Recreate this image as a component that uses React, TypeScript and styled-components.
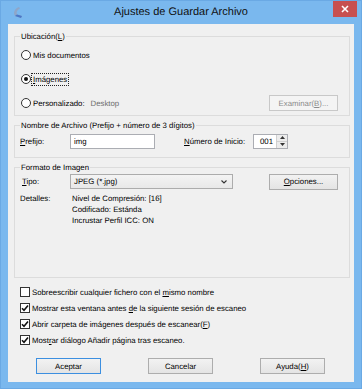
import React from 'react';
import styled, { createGlobalStyle } from 'styled-components';

const Global = createGlobalStyle`
  html, body { margin: 0; padding: 0; background: #7ab8ee; }
  body { font-family: "Liberation Sans", Arial, sans-serif; text-rendering: geometricPrecision; }
  #root { width: 362px; height: 389px; }
  * { box-sizing: border-box; }
`;

const Window = styled.div`
  width: 362px;
  height: 389px;
  background: #7ab8ee;
  border: 1px solid #6aa9e4;
  display: flex;
  flex-direction: column;
`;

const TitleBar = styled.div`
  height: 23px;
  display: grid;
  grid-template-columns: 1fr auto 1fr;
  align-items: start;
`;

const AppIcon = styled.svg`
  margin: 5px 0 0 10px;
  width: 12px;
  height: 13px;
`;

const Title = styled.div`
  font-size: 11px;
  line-height: 23px;
  color: #111;
  white-space: nowrap;
`;

const Close = styled.div`
  justify-self: end;
  margin-right: 4px;
  width: 24px;
  height: 16px;
  background: #c75050;
  display: flex;
  align-items: center;
  justify-content: center;
`;

const Client = styled.div`
  flex: 1;
  margin: 0 7px 6px 7px;
  background: #f0f0f0;
  display: flex;
  flex-direction: column;
  padding-top: 7px;
  font-size: 7.8px;
  color: #000;
`;

const Group = styled.fieldset<{ $pt?: number; $pb?: number; $mt?: number }>`
  margin: ${p => p.$mt ?? 0}px 4px 0 6px;
  padding: ${p => p.$pt ?? 0}px 4px ${p => p.$pb ?? 0}px 5px;
  border: 1px solid #dcdcdc;
  min-width: 0;
`;

const Legend = styled.legend`
  padding: 0 1px;
  font-size: 7.8px;
  line-height: 11px;
`;

const Row = styled.div<{ $h: number }>`
  height: ${p => p.$h}px;
  display: flex;
  align-items: center;
  white-space: pre;
`;

const RadioCircle = styled.span<{ $on?: boolean }>`
  width: 10px;
  height: 10px;
  margin-left: 1px;
  margin-right: 2px;
  border-radius: 50%;
  border: 1px solid #333;
  background: #fff;
  display: flex;
  align-items: center;
  justify-content: center;
  &::after {
    content: '';
    width: 4px;
    height: 4px;
    border-radius: 50%;
    background: ${p => (p.$on ? '#111' : 'transparent')};
  }
`;

const Focus = styled.span`
  outline: 1px dotted #222;
  outline-offset: 1px;
`;

const Muted = styled.span`
  color: #6d6d6d;
  margin-left: 6px;
`;

const Btn = styled.div<{ $w: number; $h?: number; $disabled?: boolean; $default?: boolean }>`
  width: ${p => p.$w}px;
  height: ${p => p.$h ?? 16}px;
  display: flex;
  align-items: center;
  justify-content: center;
  border: 1px solid ${p => (p.$default ? '#3c8fe0' : p.$disabled ? '#c8c8c8' : '#adadad')};
  background: ${p => (p.$disabled ? '#f4f4f4' : 'linear-gradient(#f2f2f2, #e4e4e4)')};
  color: ${p => (p.$disabled ? '#8a8a8a' : '#000')};
  white-space: pre;
`;

const PushRight = styled.div<{ $mr: number }>`
  margin-left: auto;
  margin-right: ${p => p.$mr}px;
`;

const Label = styled.span<{ $w: number; $pl?: number }>`
  width: ${p => p.$w}px;
  padding-left: ${p => p.$pl ?? 0}px;
  flex: none;
`;

const TextBox = styled.div<{ $w: number }>`
  width: ${p => p.$w}px;
  height: 15px;
  border: 1px solid #abadb3;
  background: #fff;
  display: flex;
  align-items: center;
  padding-left: 3px;
`;

const NumBox = styled.div`
  margin-left: 5px;
  height: 15px;
  display: flex;
  border: 1px solid #abadb3;
  background: #fff;
`;

const NumText = styled.div`
  width: 22px;
  text-align: right;
  padding-right: 3px;
  line-height: 13px;
`;

const Spin = styled.div`
  width: 11px;
  display: flex;
  flex-direction: column;
  border-left: 1px solid #d0d0d0;
  background: #ececec;
`;

const SpinHalf = styled.div`
  flex: 1;
  display: flex;
  align-items: center;
  justify-content: center;
  &:first-child { border-bottom: 1px solid #d0d0d0; }
`;

const Combo = styled.div`
  width: 163px;
  height: 15px;
  border: 1px solid #acacac;
  background: linear-gradient(#f4f4f4, #e8e8e8);
  display: flex;
  align-items: center;
  padding: 0 5px 0 3px;
  justify-content: space-between;
`;

const Details = styled.div`
  margin-top: 3px;
  display: flex;
  line-height: 11px;
`;

const DetailLines = styled.div`
  display: flex;
  flex-direction: column;
  white-space: pre;
`;

const Checks = styled.div`
  margin-top: 6px;
  padding-left: 12px;
  display: flex;
  flex-direction: column;
`;

const CheckBox = styled.span`
  width: 10px;
  height: 10px;
  border: 1px solid #333;
  background: #fff;
  margin-right: 2px;
  display: flex;
  align-items: center;
  justify-content: center;
`;

const Buttons = styled.div`
  margin-top: 10px;
  padding-left: 28px;
  display: flex;
  gap: 47px;
`;

const Check = ({ on, children }: { on?: boolean; children: React.ReactNode }) => (
  <Row $h={16}>
    <CheckBox>
      {on && (
        <svg width="8" height="8" viewBox="0 0 8 8">
          <path d="M1 4.2 L3 6.2 L7 1.5" stroke="#111" strokeWidth="1.6" fill="none" />
        </svg>
      )}
    </CheckBox>
    <span>{children}</span>
  </Row>
);

export default function App() {
  return (
    <>
      <Global />
      <Window>
        <TitleBar>
          <AppIcon viewBox="0 0 12 13">
            <path d="M8 1 C3 3 2 7 4 10 L10 12 L11 10 L6 8.5 C5 6.5 6 4 9 2.5 Z" fill="#8fa6c8" />
            <path d="M4 10 L10 12 L11 10 L6 8.5 Z" fill="#4a78c8" />
          </AppIcon>
          <Title>Ajustes de Guardar Archivo</Title>
          <Close>
            <svg width="8" height="8" viewBox="0 0 8 8">
              <path d="M1 1 L7 7 M7 1 L1 7" stroke="#fff" strokeWidth="1.6" />
            </svg>
          </Close>
        </TitleBar>
        <Client>
          <Group $pt={1}>
            <Legend>
              Ubicación(<u>L</u>)
            </Legend>
            <Row $h={24}>
              <RadioCircle />
              Mis documentos
            </Row>
            <Row $h={24}>
              <RadioCircle $on />
              <Focus>
                <u>I</u>mágenes
              </Focus>
            </Row>
            <Row $h={24}>
              <RadioCircle />
              Personalizado:
              <Muted>Desktop</Muted>
              <PushRight $mr={7}>
                <Btn $w={69} $disabled>
                  Examinar(<u>B</u>)...
                </Btn>
              </PushRight>
            </Row>
          </Group>

          <Group $mt={4} $pb={6}>
            <Legend>Nombre de Archivo (Prefijo + número de 3 dígitos)</Legend>
            <Row $h={20}>
              <Label $w={50}>
                <u>P</u>refijo:
              </Label>
              <TextBox $w={85}>img</TextBox>
              <Label $w={93} $pl={29}>
                <u>N</u>úmero de Inicio:
              </Label>
              <NumBox>
                <NumText>001</NumText>
                <Spin>
                  <SpinHalf>
                    <svg width="5" height="3" viewBox="0 0 5 3">
                      <path d="M0 3 L2.5 0 L5 3 Z" fill="#333" />
                    </svg>
                  </SpinHalf>
                  <SpinHalf>
                    <svg width="5" height="3" viewBox="0 0 5 3">
                      <path d="M0 0 L2.5 3 L5 0 Z" fill="#333" />
                    </svg>
                  </SpinHalf>
                </Spin>
              </NumBox>
            </Row>
          </Group>

          <Group $mt={4} $pb={51}>
            <Legend>Formato de Imagen</Legend>
            <Row $h={17}>
              <Label $w={50} $pl={2}>
                <u>T</u>ipo:
              </Label>
              <Combo>
                <span>JPEG (*.jpg)</span>
                <svg width="6" height="4" viewBox="0 0 6 4">
                  <path d="M0.5 0.5 L3 3 L5.5 0.5" stroke="#333" strokeWidth="1.1" fill="none" />
                </svg>
              </Combo>
              <PushRight $mr={7}>
                <Btn $w={69}>
                  <u>O</u>pciones...
                </Btn>
              </PushRight>
            </Row>
            <Details>
              <Label $w={52}>Detalles:</Label>
              <DetailLines>
                <span>Nivel de Compresión: [16]</span>
                <span>Codificado: Estánda</span>
                <span>Incrustar Perfil ICC: ON</span>
              </DetailLines>
            </Details>
          </Group>

          <Checks>
            <Check>
              {'Sobreescribir cualquier fichero con el '}
              <u>m</u>
              {'ismo nombre'}
            </Check>
            <Check on>
              {'Mostrar esta ventana antes '}
              <u>d</u>
              {'e la siguiente sesión de escaneo'}
            </Check>
            <Check on>
              {'Abrir carpeta de imágenes después de escanear('}
              <u>F</u>
              {')'}
            </Check>
            <Check on>
              {'Most'}
              <u>r</u>
              {'ar diálogo Añadir página tras escaneo.'}
            </Check>
          </Checks>

          <Buttons>
            <Btn $w={65} $default>
              Aceptar
            </Btn>
            <Btn $w={65}>Cancelar</Btn>
            <Btn $w={65}>
              Ayuda(<u>H</u>)
            </Btn>
          </Buttons>
        </Client>
      </Window>
    </>
  );
}
